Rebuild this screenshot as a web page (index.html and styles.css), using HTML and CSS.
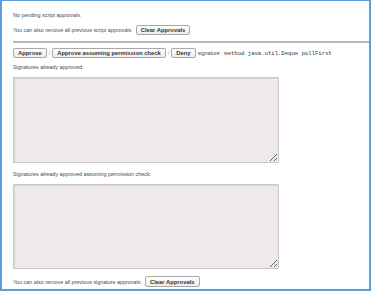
FILE: index.html
```html
<!DOCTYPE html>
<html>
<head>
<meta charset="utf-8">
<link rel="stylesheet" href="styles.css">
</head>
<body>
<div class="frame">
  <p class="line p1">No pending script approvals.</p>
  <div class="row r2">
    <span>You can also remove all previous script approvals:</span>
    <button class="btn">Clear Approvals</button>
  </div>
  <hr class="rule">
  <div class="row r3">
    <button class="btn">Approve</button>
    <span class="sep">/</span>
    <button class="btn">Approve assuming permission check</button>
    <span class="sep">/</span>
    <button class="btn">Deny</button>
    <span class="sig">signature : <code>method java.util.Deque pollFirst</code></span>
  </div>
  <p class="line l1">Signatures already approved:</p>
  <textarea class="box b1" readonly></textarea>
  <p class="line l2">Signatures already approved assuming permission check:</p>
  <textarea class="box b2" readonly></textarea>
  <div class="row r4">
    <span>You can also remove all previous signature approvals:</span>
    <button class="btn">Clear Approvals</button>
  </div>
</div>
</body>
</html>
```
FILE: styles.css
```css
html, body {
  margin: 0;
  padding: 0;
  background: #ffffff;
}
.frame {
  box-sizing: border-box;
  width: 371px;
  height: 291px;
  border: 2px solid #5b9edb;
  border-top-width: 1px;
  padding-left: 11px;
  font-family: "Liberation Sans", Arial, sans-serif;
  font-size: 5.4px;
  color: #4a4a4a;
  display: flex;
  flex-direction: column;
  align-items: flex-start;
}
.line {
  margin: 0;
  height: 7px;
  line-height: 7px;
  white-space: nowrap;
}
.row {
  display: flex;
  align-items: center;
  white-space: nowrap;
  height: 10px;
}
.btn {
  box-sizing: border-box;
  height: 10px;
  margin: 0;
  padding: 0 4px;
  border: 1px solid #a9a9a9;
  border-radius: 2px;
  background: linear-gradient(#ffffff, #ececec);
  font-family: "Liberation Sans", Arial, sans-serif;
  font-size: 5.85px;
  font-weight: bold;
  color: #333333;
  line-height: 8px;
}
.p1 { margin-top: 11px; }
.r2 { margin-top: 6px; gap: 3px; }
.rule {
  align-self: stretch;
  margin: 6px 0 0 0;
  height: 0;
  border: 0;
  border-top: 2px solid #b7b7b7;
}
.r3 { margin-top: 5px; }
.sep {
  color: #999999;
  margin: 0 2px;
}
.sig {
  margin-left: 2px;
}
.sig code {
  font-family: "Liberation Mono", "Courier New", monospace;
  font-size: 5.6px;
  color: #333333;
}
.l1 { margin-top: 6px; }
.box {
  box-sizing: border-box;
  width: 266px;
  margin: 6px 0 0 0;
  padding: 0;
  border: 1px solid #cbc7c7;
  border-radius: 1px;
  background: #efe9ed;
  box-shadow: inset 1px 1px 1px #d6d2d2;
  resize: both;
}
.b1 { height: 86px; }
.l2 { margin-top: 8px; }
.b2 { height: 85px; }
.r4 { margin-top: 7px; gap: 3px; height: 11px; }
.r4 .btn { height: 11px; }
```
